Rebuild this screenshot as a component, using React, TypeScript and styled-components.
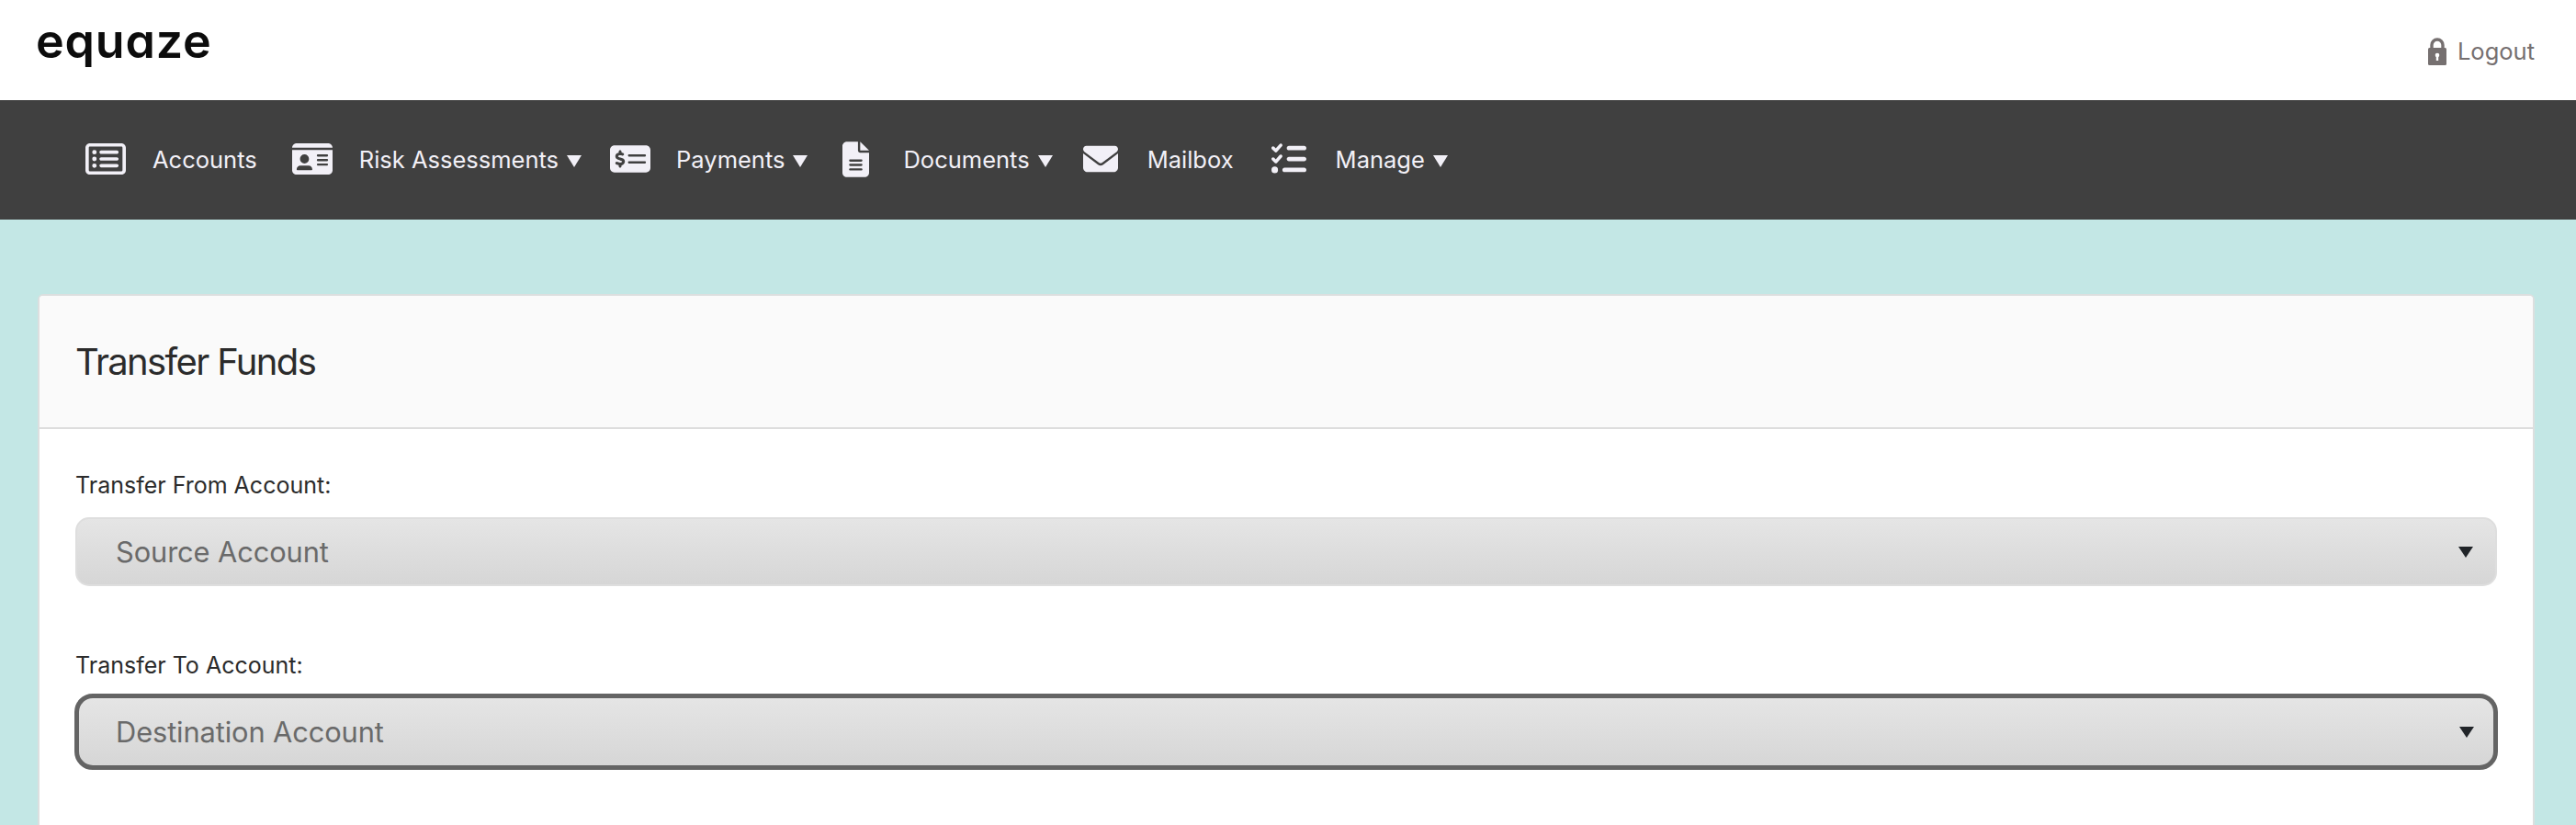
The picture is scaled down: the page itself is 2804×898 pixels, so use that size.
import React from 'react';
import styled, { createGlobalStyle } from 'styled-components';
import {
  FaRegRectangleList,
  FaIdCard,
  FaMoneyCheckDollar,
  FaFileLines,
  FaEnvelope,
  FaListCheck,
} from 'react-icons/fa6';

const GlobalStyle = createGlobalStyle`
  html, body {
    margin: 0;
    padding: 0;
    height: 898px;
    overflow: hidden;
    background: #c3e7e5;
    font-family: Inter, "Liberation Sans", sans-serif;
  }
`;

const TopBar = styled.header`
  height: 109px;
  background: #fff;
  display: flex;
  justify-content: space-between;
  padding: 0 45px 0 39px;
`;

const Logo = styled.div`
  font-family: Inter, "Liberation Sans", sans-serif;
  font-feature-settings: 'cv11' 1;
  font-size: 52px;
  font-weight: 600;
  line-height: 50px;
  letter-spacing: 0.8px;
  color: #0c0c0c;
  margin-top: 20px;
`;

const LogoutLink = styled.a`
  display: flex;
  align-items: center;
  gap: 12px;
  font-size: 25.5px;
  color: #767070;
  padding-top: 2px;
`;

const NavBar = styled.nav`
  height: 130px;
  box-sizing: border-box;
  background: #404040;
  display: flex;
  align-items: center;
  padding: 0 0 2px 93px;
`;

const NavItem = styled.a<{ $gap: number; $inner: number }>`
  display: flex;
  align-items: center;
  gap: ${(p) => p.$inner}px;
  margin-right: ${(p) => p.$gap}px;
  font-size: 25.5px;
  color: #f2f0f7;
  svg {
    display: block;
  }
`;

const NavLabel = styled.span`
  display: flex;
  align-items: center;
  gap: 9px;
`;

const Caret = styled.span`
  width: 0;
  height: 0;
  margin-top: 4px;
  border-left: 8px solid transparent;
  border-right: 8px solid transparent;
  border-top: 13px solid #f2f0f7;
`;

const Main = styled.main`
  padding: 81px 45px 0 41px;
`;

const Card = styled.section`
  background: #fff;
  border: 2px solid #dcdfdf;
  border-bottom: 0;
  border-radius: 6px 6px 0 0;
  height: 600px;
`;

const CardHeader = styled.div`
  height: 143px;
  background: #fafafa;
  border-bottom: 2px solid #dddddd;
  border-radius: 4px 4px 0 0;
  display: flex;
  align-items: center;
  padding-left: 39px;
`;

const Title = styled.h2`
  margin: 0;
  font-size: 40px;
  font-weight: 400;
  letter-spacing: -1.65px;
  color: #2b2b2b;
`;

const CardBody = styled.div`
  padding: 46px 39px 0;
  display: flex;
  flex-direction: column;
  gap: 71px;
`;

const Field = styled.div`
  display: flex;
  flex-direction: column;
  gap: 20px;
`;

const Label = styled.label`
  font-size: 25px;
  line-height: 30px;
  color: #2b2b2b;
`;

const Select = styled.div<{ $focused?: boolean }>`
  height: ${(p) => (p.$focused ? 83 : 75)}px;
  box-sizing: border-box;
  border: ${(p) => (p.$focused ? '5px solid #646464' : '2px solid #dedede')};
  border-radius: ${(p) => (p.$focused ? 20 : 15)}px;
  margin: ${(p) => (p.$focused ? '-4px -1px 0' : '0')};
  background: linear-gradient(#e5e5e5, #d6d6d6);
  display: flex;
  align-items: center;
  justify-content: space-between;
  padding: 0 ${(p) => (p.$focused ? 21 : 24)}px 0 ${(p) => (p.$focused ? 40 : 42)}px;
  font-size: 30.8px;
  letter-spacing: -0.1px;
  color: #6a6a6a;
`;

const SelectArrow = styled.span`
  width: 0;
  height: 0;
  border-left: 8px solid transparent;
  border-right: 8px solid transparent;
  border-top: 12px solid #212529;
`;

const LockIcon = () => (
  <svg width="20" height="30" viewBox="0 0 20 30">
    <path d="M4 13V8a6 6 0 0 1 12 0v5" fill="none" stroke="#767070" strokeWidth="3.4" />
    <rect x="0" y="11" width="20" height="19" rx="1.5" fill="#767070" />
    <circle cx="10" cy="19" r="2.3" fill="#fff" />
    <rect x="8.8" y="19" width="2.4" height="6" fill="#fff" />
  </svg>
);

const navItems = [
  { icon: FaRegRectangleList, w: 44, h: 44, label: 'Accounts', caret: false, inner: 29, gap: 38 },
  { icon: FaIdCard, w: 44, h: 44, label: 'Risk Assessments', caret: true, inner: 29, gap: 31 },
  { icon: FaMoneyCheckDollar, w: 44, h: 44, label: 'Payments', caret: true, inner: 28, gap: 38 },
  { icon: FaFileLines, w: 29, h: 39, label: 'Documents', caret: true, inner: 37, gap: 33 },
  { icon: FaEnvelope, w: 38, h: 38, label: 'Mailbox', caret: false, inner: 32, gap: 41 },
  { icon: FaListCheck, w: 38, h: 38, label: 'Manage', caret: true, inner: 32, gap: 0 },
];

const App = () => {
  return (
    <>
      <GlobalStyle />
      <TopBar>
        <Logo>equaze</Logo>
        <LogoutLink>
          <LockIcon />
          Logout
        </LogoutLink>
      </TopBar>
      <NavBar>
        {navItems.map((item) => (
          <NavItem key={item.label} $gap={item.gap} $inner={item.inner}>
            <item.icon style={{ width: item.w, height: item.h }} />
            <NavLabel>
              {item.label}
              {item.caret && <Caret />}
            </NavLabel>
          </NavItem>
        ))}
      </NavBar>
      <Main>
        <Card>
          <CardHeader>
            <Title>Transfer Funds</Title>
          </CardHeader>
          <CardBody>
            <Field>
              <Label>Transfer From Account:</Label>
              <Select>
                Source Account
                <SelectArrow />
              </Select>
            </Field>
            <Field>
              <Label>Transfer To Account:</Label>
              <Select $focused>
                Destination Account
                <SelectArrow />
              </Select>
            </Field>
          </CardBody>
        </Card>
      </Main>
    </>
  );
};

export default App;
